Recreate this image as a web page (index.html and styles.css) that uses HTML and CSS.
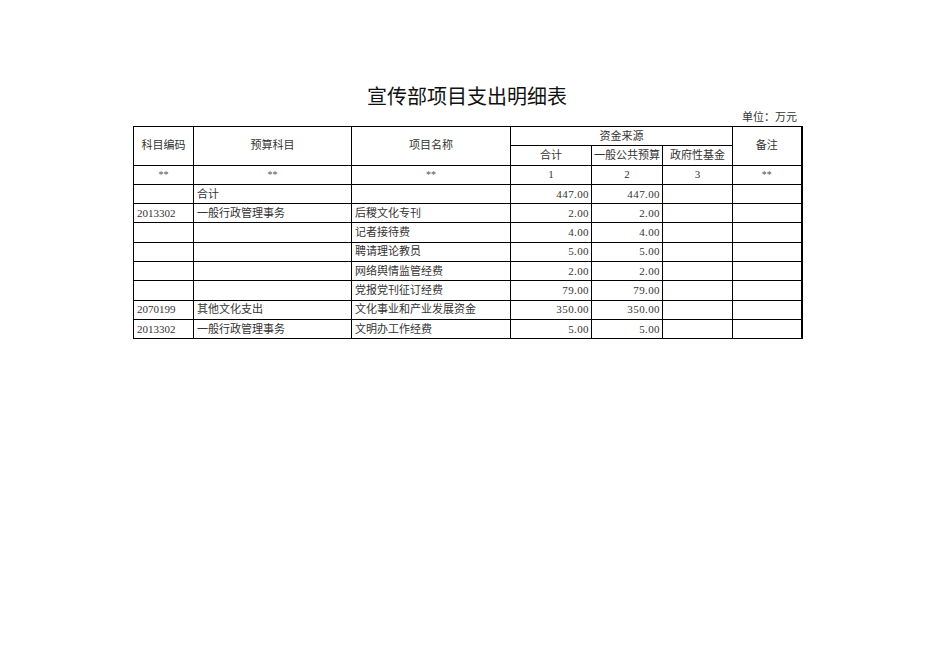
FILE: index.html
```html
<!DOCTYPE html>
<html lang="zh-CN">
<head>
<meta charset="utf-8">
<title>宣传部项目支出明细表</title>
<link rel="stylesheet" href="styles.css">
</head>
<body>
<div class="sheet">
  <h1 class="title">宣传部项目支出明细表</h1>
  <div class="unit">单位：万元</div>
  <table class="grid">
    <colgroup>
      <col class="c1"><col class="c2"><col class="c3"><col class="c4"><col class="c5"><col class="c6"><col class="c7">
    </colgroup>
    <thead>
      <tr>
        <th rowspan="2">科目编码</th>
        <th rowspan="2">预算科目</th>
        <th rowspan="2">项目名称</th>
        <th colspan="3">资金来源</th>
        <th rowspan="2" class="last">备注</th>
      </tr>
      <tr>
        <th>合计</th>
        <th>一般公共预算</th>
        <th>政府性基金</th>
      </tr>
      <tr>
        <th class="star">**</th>
        <th class="star">**</th>
        <th class="star">**</th>
        <th>1</th>
        <th>2</th>
        <th>3</th>
        <th class="star last">**</th>
      </tr>
    </thead>
    <tbody>
      <tr><td></td><td>合计</td><td></td><td class="num">447.00</td><td class="num">447.00</td><td></td><td class="last"></td></tr>
      <tr><td>2013302</td><td>一般行政管理事务</td><td>后稷文化专刊</td><td class="num">2.00</td><td class="num">2.00</td><td></td><td class="last"></td></tr>
      <tr><td></td><td></td><td>记者接待费</td><td class="num">4.00</td><td class="num">4.00</td><td></td><td class="last"></td></tr>
      <tr><td></td><td></td><td>聘请理论教员</td><td class="num">5.00</td><td class="num">5.00</td><td></td><td class="last"></td></tr>
      <tr><td></td><td></td><td>网络舆情监管经费</td><td class="num">2.00</td><td class="num">2.00</td><td></td><td class="last"></td></tr>
      <tr><td></td><td></td><td>党报党刊征订经费</td><td class="num">79.00</td><td class="num">79.00</td><td></td><td class="last"></td></tr>
      <tr><td>2070199</td><td>其他文化支出</td><td>文化事业和产业发展资金</td><td class="num">350.00</td><td class="num">350.00</td><td></td><td class="last"></td></tr>
      <tr><td>2013302</td><td>一般行政管理事务</td><td>文明办工作经费</td><td class="num">5.00</td><td class="num">5.00</td><td></td><td class="last"></td></tr>
    </tbody>
  </table>
</div>
</body>
</html>
```
FILE: styles.css
```css
html, body {
  margin: 0;
  padding: 0;
  background: #ffffff;
}

.sheet {
  width: 668px;
  margin-left: 133px;
  padding-top: 84px;
  font-family: "Liberation Serif", "Noto Sans CJK SC", serif;
  color: #333333;
}

.title {
  margin: 0;
  height: 24px;
  line-height: 24px;
  font-family: "Noto Sans CJK SC", sans-serif;
  font-size: 20px;
  font-weight: 400;
  color: #111111;
  text-align: center;
}

.unit {
  height: 18px;
  line-height: 18px;
  font-size: 11px;
  text-align: right;
  padding-right: 4px;
}

.grid {
  border-collapse: collapse;
  table-layout: fixed;
  width: 668px;
  font-size: 11px;
}

.c1 { width: 60px; }
.c2 { width: 158px; }
.c3 { width: 159px; }
.c4 { width: 81px; }
.c5 { width: 71px; }
.c6 { width: 70px; }
.c7 { width: 69px; }

.grid tr {
  height: 19.3px;
}

.grid th,
.grid td {
  border: 1px solid #000000;
  padding: 0 2px 0 3px;
  line-height: 17px;
  white-space: nowrap;
  overflow: hidden;
  vertical-align: middle;
}

.grid th {
  font-weight: normal;
  text-align: center;
  padding: 0;
}

.grid th.star {
  font-size: 10px;
  color: #555555;
}

.grid td {
  text-align: left;
}

.grid td.num {
  text-align: right;
  padding-right: 2px;
  letter-spacing: 0.4px;
}

.grid .last {
  border-right: 2px solid #000000;
}
```
